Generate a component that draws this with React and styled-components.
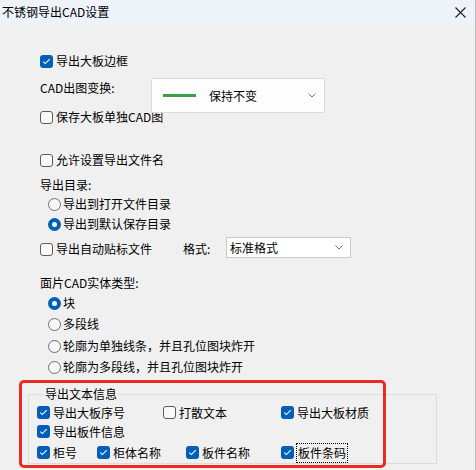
import React from 'react'
import styled, { createGlobalStyle } from 'styled-components'

const Global = createGlobalStyle`
  body {
    margin: 0;
    background: #f0f0f0;
  }
`

const Window = styled.div`
  position: relative;
  width: 476px;
  height: 470px;
  box-sizing: border-box;
  border-right: 1px solid #b9bcc2;
  background: #f0f0f0;
  overflow: hidden;
  font-family: "Noto Sans CJK SC", "Noto Sans", sans-serif;
  font-size: 12px;
  color: #000;
`

const TitleBar = styled.div`
  height: 24px;
  display: flex;
  align-items: center;
  justify-content: space-between;
  padding: 0 9px 0 2px;
  background: #eef2f9;
  line-height: 20px;
`

const Body = styled.div`
  padding: 27px 0 0 40px;
`

const Row = styled.div`
  display: flex;
  align-items: center;
  height: ${p => p.h || 20}px;
  margin-top: ${p => p.mt || 0}px;
  padding-left: ${p => p.indent || 0}px;
  line-height: 20px;
  white-space: nowrap;
`

const Label = styled.span`
  width: ${p => (p.w ? p.w + 'px' : 'auto')};
  flex-shrink: 0;
`

const Item = styled.label`
  display: flex;
  align-items: center;
  width: ${p => (p.w ? p.w + 'px' : 'auto')};
  flex-shrink: 0;
`

const Box = styled.span`
  width: 13px;
  height: 13px;
  box-sizing: border-box;
  border-radius: 3px;
  margin-right: 3px;
  flex-shrink: 0;
  display: flex;
  align-items: center;
  justify-content: center;
  background: ${p => (p.on ? '#005fb8' : '#f9f9f9')};
  border: ${p => (p.on ? 'none' : '1px solid #5c5c5c')};
`

const Round = styled.span`
  width: 13px;
  height: 13px;
  box-sizing: border-box;
  border-radius: 50%;
  margin-right: 2px;
  flex-shrink: 0;
  display: flex;
  align-items: center;
  justify-content: center;
  background: ${p => (p.on ? '#005fb8' : '#f7f7f7')};
  border: ${p => (p.on ? 'none' : '1px solid #6e6e6e')};
  &::after {
    content: '';
    display: ${p => (p.on ? 'block' : 'none')};
    width: 5px;
    height: 5px;
    border-radius: 50%;
    background: #fff;
  }
`

const Text = styled.span`
  outline: ${p => (p.focus ? '1px dotted #000' : 'none')};
  padding: ${p => (p.focus ? '0 1px' : '0')};
  line-height: ${p => (p.focus ? '18px' : '20px')};
`

const Combo = styled.div`
  position: relative;
  z-index: 1;
  align-self: flex-start;
  width: 174px;
  height: 35px;
  box-sizing: border-box;
  display: flex;
  align-items: center;
  padding: 0 8px 0 11px;
  background: #fdfdfd;
  border: 1px solid #dadada;
  border-radius: 2px;
`

const LineSwatch = styled.span`
  width: 33px;
  height: 3px;
  background: #3c9f43;
  margin-right: 13px;
`

const Select = styled.div`
  width: 125px;
  height: 21px;
  box-sizing: border-box;
  display: flex;
  align-items: center;
  justify-content: space-between;
  padding: 0 7px 0 3px;
  background: #fff;
  border: 1px solid #c9c9c9;
  margin-top: -3px;
`

const Spacer = styled.span`
  flex: 1;
`

const Group = styled.fieldset`
  margin: 9px 0 0 -12px;
  width: 409px;
  box-sizing: border-box;
  padding: 0 0 1px 8px;
  border: 1px solid #dcdcdc;
  border-radius: 0;
`

const Legend = styled.legend`
  padding: 0 2px;
  margin-left: 6px;
  line-height: 16px;
`

const Marker = styled.div`
  position: absolute;
  left: 19px;
  top: 380px;
  width: 367px;
  height: 88px;
  box-sizing: border-box;
  border: 3px solid #ec2a22;
  border-radius: 5px;
  pointer-events: none;
`

const Tick = () => (
  <svg width="9" height="9" viewBox="0 0 9 9">
    <path d="M1.3 4.6 L3.4 6.6 L7.7 2.2" fill="none" stroke="#fff" strokeWidth="1.1" />
  </svg>
)

const Chevron = ({ size = 8 }) => (
  <svg width={size} height={size / 2 + 1} viewBox="0 0 8 5">
    <path d="M0.5 0.5 L4 4 L7.5 0.5" fill="none" stroke="#5f5f5f" strokeWidth="0.9" />
  </svg>
)

const Check = ({ on, w, focus, children }) => (
  <Item w={w}>
    <Box on={on}>{on && <Tick />}</Box>
    <Text focus={focus}>{children}</Text>
  </Item>
)

const Radio = ({ on, children }) => (
  <Item>
    <Round on={on} />
    <Text>{children}</Text>
  </Item>
)

const App = () => {
  return (
    <Window>
      <Global />
      <TitleBar>
        <span>不锈钢导出CAD设置</span>
        <svg width="11" height="11" viewBox="0 0 11 11">
          <path d="M0.5 0.5 L10.5 10.5 M10.5 0.5 L0.5 10.5" stroke="#1f1f1f" strokeWidth="1.1" />
        </svg>
      </TitleBar>
      <Body>
        <Row>
          <Check on>导出大板边框</Check>
        </Row>
        <Row mt={7}>
          <Label w={111}>CAD出图变换:</Label>
          <Combo>
            <LineSwatch />
            <span>保持不变</span>
            <Spacer />
            <Chevron />
          </Combo>
        </Row>
        <Row mt={9}>
          <Check>保存大板单独CAD图</Check>
        </Row>
        <Row mt={23}>
          <Check>允许设置导出文件名</Check>
        </Row>
        <Row mt={5}>
          <Label>导出目录:</Label>
        </Row>
        <Row mt={-1} indent={8}>
          <Radio>导出到打开文件目录</Radio>
        </Row>
        <Row mt={0} indent={8}>
          <Radio on>导出到默认保存目录</Radio>
        </Row>
        <Row mt={5}>
          <Check w={143}>导出自动贴标文件</Check>
          <Label w={43}>格式:</Label>
          <Select>
            <span>标准格式</span>
            <Chevron />
          </Select>
        </Row>
        <Row mt={14}>
          <Label>面片CAD实体类型:</Label>
        </Row>
        <Row mt={0} indent={8}>
          <Radio on>块</Radio>
        </Row>
        <Row mt={1} indent={8}>
          <Radio>多段线</Radio>
        </Row>
        <Row mt={2} indent={8}>
          <Radio>轮廓为单独线条，并且孔位图块炸开</Radio>
        </Row>
        <Row mt={1} indent={8}>
          <Radio>轮廓为多段线，并且孔位图块炸开</Radio>
        </Row>
        <Group>
          <Legend>导出文本信息</Legend>
          <Row h={19} mt={1}>
            <Check on w={126}>导出大板序号</Check>
            <Check w={118}>打散文本</Check>
            <Check on>导出大板材质</Check>
          </Row>
          <Row h={19}>
            <Check on>导出板件信息</Check>
          </Row>
          <Row h={19} mt={2}>
            <Check on w={60}>柜号</Check>
            <Check on w={89}>柜体名称</Check>
            <Check on w={95}>板件名称</Check>
            <Check on focus>板件条码</Check>
          </Row>
        </Group>
      </Body>
      <Marker />
    </Window>
  )
}

export default App
